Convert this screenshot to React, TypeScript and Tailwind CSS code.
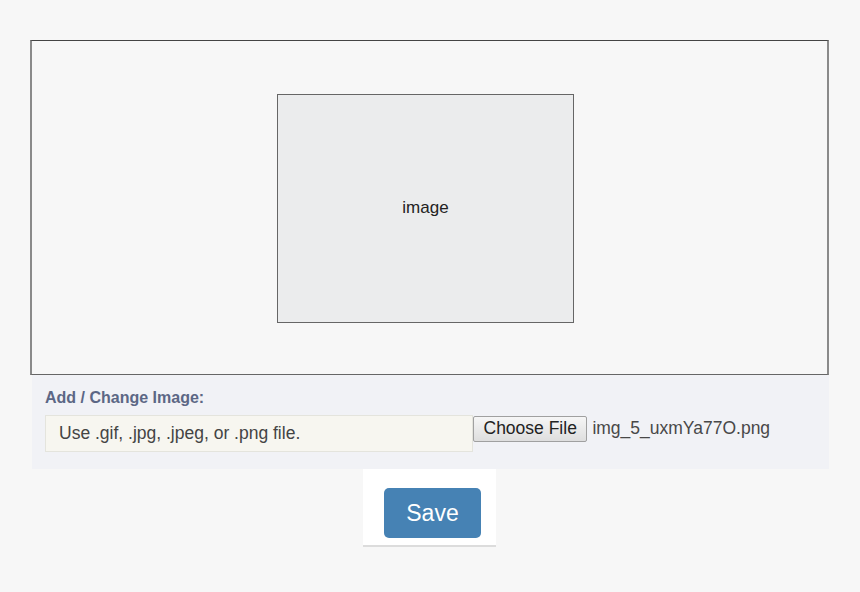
import React from 'react';

const App: React.FC = () => {
    return (
        <div className="min-h-[592px] w-[860px] bg-[#f7f7f7] pt-[40px] pl-[30px] font-['Liberation_Sans',Arial,sans-serif]">
            <div className="w-[799px]">
                {/* Preview frame */}
                <div className="h-[335px] border-t border-t-[#444] border-b border-b-[#666] border-x-2 border-x-[#8a8a8a] pt-[53px] flex justify-center pr-[8px]">
                    <div className="w-[297px] h-[229px] bg-[#ebeced] border border-[#666] flex items-center justify-center">
                        <span className="text-[17px] text-[#222] -mt-[2px]">image</span>
                    </div>
                </div>

                {/* Upload panel */}
                <div className="ml-[2px] w-[797px] h-[94px] bg-[#f1f2f6] pl-[13px] pt-[13px]">
                    <div className="text-[16px] font-bold text-[#5c6785] leading-[20px]">Add / Change Image:</div>
                    <div className="flex items-start mt-[7px]">
                        <div className="w-[428px] h-[37px] bg-[#f7f6f0] border border-[#e4e4dd] pl-[13px] flex items-center text-[17.5px] text-[#444]">
                            Use .gif, .jpg, .jpeg, or .png file.
                        </div>
                        <button className="mt-[1px] h-[26px] px-[9.5px] bg-gradient-to-b from-[#f6f6f6] to-[#dedede] border border-[#a0a0a0] rounded-[2px] text-[17.5px] text-[#222] leading-none">
                            Choose File
                        </button>
                        <span className="ml-[5px] mt-[3px] text-[17.5px] text-[#484848] leading-[20px]">img_5_uxmYa77O.png</span>
                    </div>
                </div>

                {/* Save */}
                <div className="flex justify-center">
                    <div className="w-[133px] h-[78px] bg-white border-b-2 border-b-[#dcdcdc] pt-[19px] pl-[21px]">
                        <button className="w-[97px] h-[50px] bg-[#4682b4] rounded-[5px] text-white text-[23px] leading-none">
                            Save
                        </button>
                    </div>
                </div>
            </div>
        </div>
    );
};

export default App;
